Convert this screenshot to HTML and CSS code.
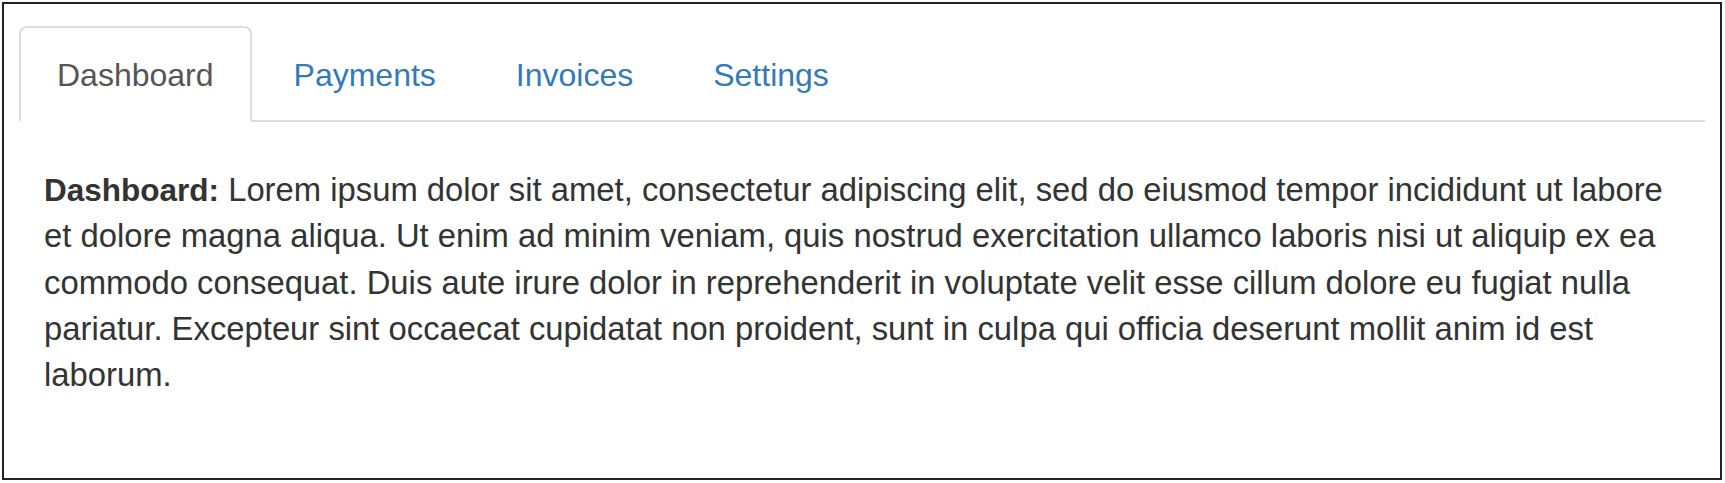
FILE: index.html
```html
<!DOCTYPE html>
<html>
<head>
<meta charset="utf-8">
<link rel="stylesheet" href="styles.css">
</head>
<body>
<div class="frame">
  <ul class="tabs">
    <li class="tab active"><a href="#">Dashboard</a></li>
    <li class="tab"><a href="#">Payments</a></li>
    <li class="tab"><a href="#">Invoices</a></li>
    <li class="tab"><a href="#">Settings</a></li>
  </ul>
  <div class="tab-content">
    <p><strong>Dashboard:</strong> Lorem ipsum dolor sit amet, consectetur adipiscing elit, sed do eiusmod tempor incididunt ut labore et dolore magna aliqua. Ut enim ad minim veniam, quis nostrud exercitation ullamco laboris nisi ut aliquip ex ea commodo consequat. Duis aute irure dolor in reprehenderit in voluptate velit esse cillum dolore eu fugiat nulla pariatur. Excepteur sint occaecat cupidatat non proident, sunt in culpa qui officia deserunt mollit anim id est laborum.</p>
  </div>
</div>
</body>
</html>
```
FILE: styles.css
```css
html, body {
  margin: 0;
  padding: 0;
  background: #fff;
}
body {
  padding: 2px;
  font-family: "Liberation Sans", Arial, sans-serif;
}
.frame {
  width: 1720px;
  height: 478px;
  box-sizing: border-box;
  border: 2px solid #222;
  padding: 22px 15px 0 15px;
}
.tabs {
  list-style: none;
  margin: 0;
  padding: 0;
  display: flex;
  gap: 4px;
  border-bottom: 2px solid #ddd;
}
.tab {
  margin-bottom: -2px;
}
.tab a {
  display: block;
  padding: 24px 36px 22px 36px;
  font-size: 32px;
  line-height: 46px;
  color: #337ab7;
  text-decoration: none;
  border: 2px solid transparent;
  border-radius: 8px 8px 0 0;
}
.tab.active a {
  color: #555;
  background: #fff;
  border-color: #ddd;
  border-bottom-color: #fff;
}
.tab-content {
  padding: 45px 25px 0 25px;
}
.tab-content p {
  margin: 0;
  font-size: 32.8px;
  line-height: 46.25px;
  color: #333;
}
.tab-content strong {
  font-weight: bold;
  font-size: 31.5px;
}
```
